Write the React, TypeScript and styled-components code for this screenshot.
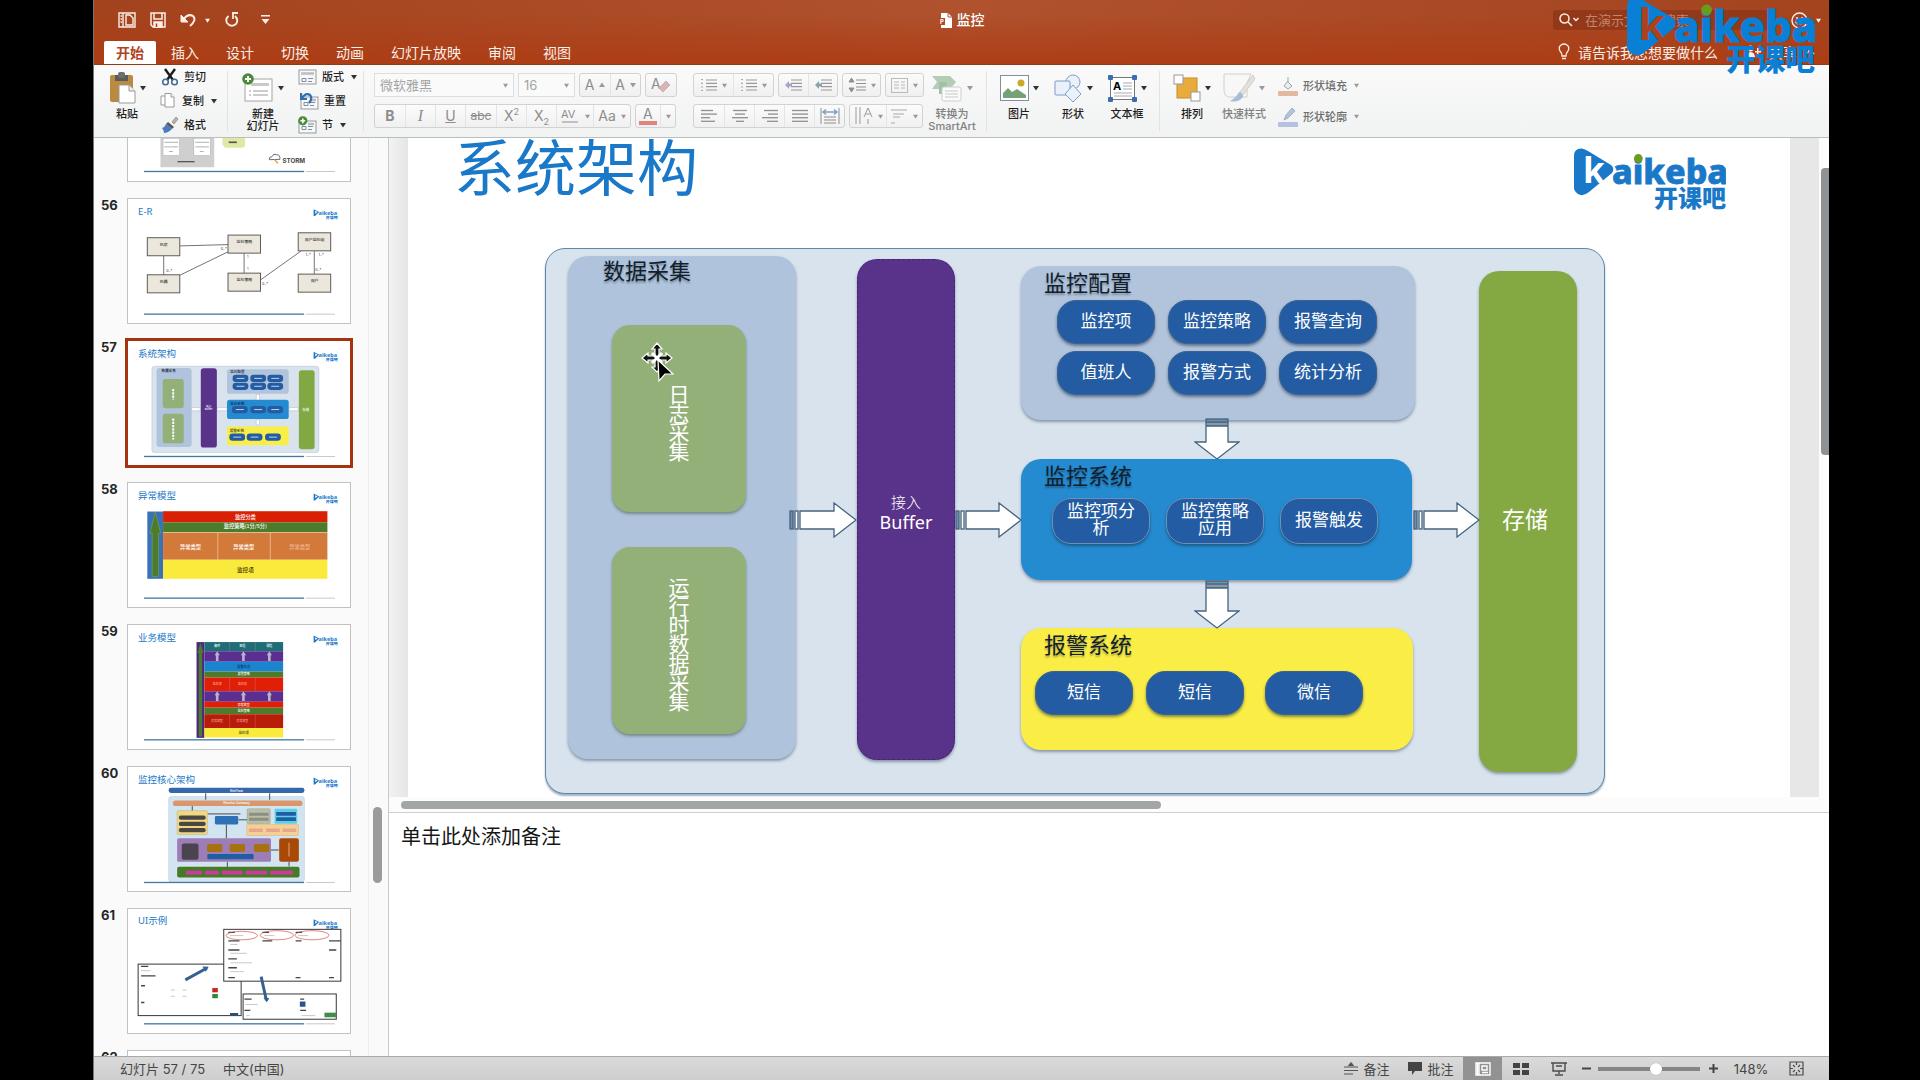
import React from "react";
import styled, { createGlobalStyle, css } from "styled-components";

const UI = `Inter, "Noto Sans CJK SC", sans-serif`;
const BLUE = "#1a78c8";

const Global = createGlobalStyle`
  * { box-sizing: border-box; }
  html, body, #root { height: 100%; }
  body { margin: 0; background: #000; font-family: ${UI}; color: #262626; overflow: hidden; }
  button, select, input, textarea { font: inherit; color: inherit; margin: 0; padding: 0; border: 0; background: none; }
  svg { display: block; flex: none; }
`;

/* ---------- window ---------- */

const Screen = styled.div`
  height: 100vh;
  padding: 0 91px 0 93px;
  background: #000;
`;

const Window = styled.div`
  position: relative;
  height: 100%;
  display: flex;
  flex-direction: column;
  border-left: 1px solid #777;
  background: #fff;
`;

const Header = styled.header`
  height: 65px;
  flex: none;
  display: flex;
  flex-direction: column;
  color: #fbeee6;
  border-bottom: 1px solid #8e3a1c;
  background: linear-gradient(180deg, transparent 20%, #ad3d15 100%),
    linear-gradient(90deg, #a2431d 0%, #b0522e 50%, #a3441f 100%);
`;

const TitleRow = styled.div`
  height: 40px;
  display: grid;
  grid-template-columns: 1fr auto 1fr;
  align-items: center;
`;

const QuickBar = styled.div`
  display: flex;
  align-items: center;
  padding: 0 24px;
  gap: 14px;
`;

const IconButton = styled.button`
  display: inline-flex;
  align-items: center;
  justify-content: center;
  gap: 8px;
`;

const DocTitle = styled.h1`
  margin: 0;
  display: flex;
  align-items: center;
  gap: 5px;
  font-size: 14px;
  line-height: 20px;
  font-weight: 500;
  color: #fff;
`;

const SearchArea = styled.div`
  display: flex;
  justify-content: flex-end;
  align-items: center;
  gap: 16px;
  padding-right: 8px;
`;

const SearchBox = styled.label`
  display: flex;
  align-items: center;
  gap: 6px;
  width: 222px;
  height: 20px;
  padding-left: 6px;
  background: #93391a;
  border-radius: 3px;
  input {
    width: 160px;
    font-size: 13px;
    line-height: 18px;
    outline: 0;
  }
  input::placeholder { color: #c4866d; opacity: 1; }
`;

const TabRow = styled.div`
  height: 24px;
  display: flex;
  justify-content: space-between;
  align-items: flex-end;
`;

const Tabs = styled.nav`
  display: flex;
  gap: 3px;
  padding-left: 10px;
`;

const Tab = styled.button<{ $active?: boolean }>`
  height: 23px;
  padding: 0 12px;
  font-size: 14px;
  line-height: 23px;
  ${(p) => p.$active && css`
    background: #fff;
    color: #b1441f;
    font-weight: 700;
    border-radius: 2px 2px 0 0;
  `}
`;

const Help = styled.div`
  display: flex;
  align-items: center;
  height: 24px;
  gap: 28px;
  padding-right: 14px;
  font-size: 14px;
`;

const Watermark = styled.div`
  position: absolute;
  top: -3px;
  right: 14px;
  z-index: 5;
`;

/* ---------- ribbon ---------- */

const Ribbon = styled.section`
  height: 73px;
  flex: none;
  display: flex;
  gap: 10px;
  padding-left: 11px;
  background: linear-gradient(180deg, #fafafa, #f1f2f2);
  border-bottom: 1px solid #bdbdbd;
  font-size: 11px;
  line-height: 12px;
`;

const Sep = styled.i`
  width: 1px;
  margin: 6px 0;
  background: #e3e3e3;
`;

const Cluster = styled.div<{ $gap: number; $lead?: number }>`
  display: flex;
  gap: ${(p) => p.$gap}px;
  margin-left: ${(p) => p.$lead || 0}px;
`;

const BigButton = styled.button<{ $w?: number; $muted?: boolean }>`
  width: ${(p) => p.$w || 44}px;
  padding-top: 6px;
  display: flex;
  flex-direction: column;
  align-items: center;
  gap: 3px;
  font-weight: 500;
  white-space: nowrap;
  color: ${(p) => (p.$muted ? "#808080" : "#1f1f1f")};
  span { display: flex; align-items: center; gap: 4px; height: 34px; }
`;

const Stack = styled.div<{ $w: number; $top?: number }>`
  width: ${(p) => p.$w}px;
  padding-top: ${(p) => p.$top || 0}px;
  display: flex;
  flex-direction: column;
`;

const SmallButton = styled.button<{ $tall?: boolean; $muted?: boolean }>`
  height: ${(p) => (p.$tall ? 31 : 24)}px;
  display: flex;
  align-items: center;
  gap: 5px;
  font-weight: 500;
  white-space: nowrap;
  color: ${(p) => (p.$muted ? "#6d6d6d" : "#1f1f1f")};
  & > svg:last-child { margin-left: 2px; }
`;

const ToolGrid = styled.div`
  display: flex;
  flex-direction: column;
  gap: 7px;
  padding-top: 8px;
`;

const ToolRow = styled.div`
  display: flex;
  gap: 4px;
  height: 24px;
`;

const ToolGroup = styled.div`
  display: flex;
  border: 1px solid #d2d2d2;
  border-radius: 3px;
  background: linear-gradient(180deg, #fbfbfb, #f0f0f0);
  color: #8d8d8d;
`;

const Tool = styled.button<{ $w: number }>`
  width: ${(p) => p.$w}px;
  display: flex;
  align-items: center;
  justify-content: center;
  gap: 5px;
  font-size: 14px;
  line-height: 22px;
  & + & { border-left: 1px solid #e4e4e4; }
  sup, sub { font-size: 9px; line-height: 9px; }
  i { font-family: "Liberation Serif", serif; font-size: 16px; }
  s { font-size: 12px; }
`;

const Combo = styled.label<{ $w: number }>`
  width: ${(p) => p.$w}px;
  display: flex;
  align-items: center;
  padding: 0 5px;
  border: 1px solid #dedede;
  background: #fafafa;
  color: #a3a3a3;
  select {
    flex: 1;
    min-width: 0;
    appearance: none;
    font-size: 13px;
    line-height: 20px;
    outline: 0;
  }
`;

/* ---------- body ---------- */

const Body = styled.div`
  flex: 1;
  min-height: 0;
  display: flex;
`;

const Navigator = styled.aside`
  width: 295px;
  flex: none;
  display: flex;
  overflow: hidden;
  background: #fafafa;
  border-right: 1px solid #c9c9c9;
`;

const SlideList = styled.ol`
  flex: 1;
  list-style: none;
  margin: -82px 0 0;
  padding: 0;
  display: flex;
  flex-direction: column;
  gap: 16px;
`;

const SlideItem = styled.li`
  display: flex;
  gap: 8px;
  padding-left: 7px;
`;

const Number = styled.span`
  width: 18px;
  font-size: 13px;
  line-height: 14px;
  font-weight: 700;
`;

const Thumb = styled.button<{ $on?: boolean }>`
  width: 224px;
  height: 126px;
  flex: none;
  overflow: hidden;
  background: #fff;
  border: 1px solid #c2c2c2;
  outline: ${(p) => (p.$on ? "3px solid #a5330f" : "0")};
  outline-offset: -1px;
  svg { width: 100%; height: 100%; }
`;

const Track = styled.div`
  width: 20px;
  padding: 669px 0 0 4px;
  border-left: 1px solid #ededed;
`;

const Grip = styled.div`
  width: 9px;
  height: 76px;
  border-radius: 5px;
  background: #9b9b9b;
`;

const Workspace = styled.main`
  flex: 1;
  min-width: 0;
  display: flex;
  flex-direction: column;
`;

const Stage = styled.div`
  flex: 1;
  min-height: 0;
  display: flex;
  padding-left: 19px;
  background: linear-gradient(90deg, #f2f2f2, #e6e6e6 18px, #e8e7e7);
`;

const StageTrack = styled.div`
  width: 10px;
  margin-left: 29px;
  padding: 30px 0 0 2px;
  background: #fcfcfc;
`;

const StageGrip = styled.div`
  height: 287px;
  border-radius: 4px 0 0 4px;
  background: #8f9295;
`;

const HTrack = styled.div`
  height: 16px;
  padding: 4px 20px 4px 12px;
  background: #fcfcfc;
  border-bottom: 1px solid #cfcfcf;
`;

const HGrip = styled.div`
  width: 54%;
  height: 8px;
  border-radius: 4px;
  background: #a3a6a7;
`;

const Notes = styled.textarea`
  height: 243px;
  flex: none;
  resize: none;
  outline: 0;
  padding: 10px 12px;
  background: #fff;
  color: #161616;
  font-size: 20px;
  line-height: 28px;
`;

/* ---------- slide ---------- */

const Slide = styled.article`
  position: relative;
  flex: 1;
  overflow: hidden;
  background: #fff;
  font-family: "Noto Sans", "Noto Sans CJK SC", sans-serif;
`;

const SlideTitle = styled.h2`
  margin: 0;
  padding: 0 46px;
  font-size: 61px;
  line-height: 60px;
  font-weight: 400;
  color: ${BLUE};
`;

const SlideLogo = styled.div`
  position: absolute;
  left: 1166px;
  top: 10px;
`;

type Box = { $x: number; $y: number; $w: number; $h: number };
const place = css<Box>`
  position: absolute;
  left: ${(p) => p.$x}px;
  top: ${(p) => p.$y}px;
  width: ${(p) => p.$w}px;
  height: ${(p) => p.$h}px;
`;

const Diagram = styled.div<Box>`
  ${place}
  border: 1px solid #5e87ad;
  border-radius: 20px;
  background: #d8e3ee;
  box-shadow: 0 2px 2px #9fb0bf;
`;

const Panel = styled.section<Box & { $bg: string }>`
  ${place}
  border-radius: 20px;
  background: ${(p) => p.$bg};
  box-shadow: 0 2px 3px rgba(60, 80, 100, 0.5);
`;

const PanelTitle = styled.h3<{ $left: number }>`
  margin: 0;
  padding: 4px 0 0 ${(p) => p.$left}px;
  font-size: 22px;
  line-height: 24px;
  font-weight: 400;
  color: #10202e;
  text-shadow: 0 2px 2px rgba(0, 0, 0, 0.3);
`;

const SourcePanel = styled(Panel)`
  ${PanelTitle} { padding-top: 2px; }
`;

const Sources = styled.div`
  display: flex;
  flex-direction: column;
  gap: 35px;
  padding: 43px 0 0 44px;
`;

const Source = styled.div`
  width: 134px;
  height: 187px;
  display: flex;
  align-items: center;
  justify-content: center;
  padding-top: 8px;
  border-radius: 18px;
  background: #93b078;
  box-shadow: 0 2px 3px rgba(60, 80, 60, 0.5);
  color: #fff;
  font-size: 21px;
  line-height: 19px;
  text-align: center;
  span { width: 21px; overflow-wrap: anywhere; }
`;

const Column = styled(Panel)`
  display: flex;
  flex-direction: column;
  align-items: center;
  justify-content: center;
  color: #fff;
  font-size: 18px;
  line-height: 20px;
  padding-top: 4px;
  b { font-weight: 300; font-size: 15px; }
`;

const BufferColumn = styled(Column)`
  border: 1px dashed #47237a;
`;

const StoreColumn = styled(Column)`
  font-size: 23px;
  padding: 0 6px 6px 0;
`;

const Pills = styled.div<{ $left: number; $top: number; $gap: number }>`
  display: grid;
  grid-template-columns: repeat(3, 98px);
  gap: 7px ${(p) => p.$gap}px;
  padding: ${(p) => p.$top}px 0 0 ${(p) => p.$left}px;
`;

const Pill = styled.div<{ $line?: string; $lead?: number; $h?: number }>`
  height: ${(p) => p.$h || 44}px;
  display: flex;
  align-items: center;
  justify-content: center;
  padding: 0 12px 4px;
  margin: 0 -${(p) => p.$lead || 0}px 0 ${(p) => p.$lead || 0}px;
  border-radius: 19px;
  border: 1px solid ${(p) => p.$line || "#3a6391"};
  background: #235ca2;
  box-shadow: 0 2px 3px rgba(20, 40, 70, 0.5);
  color: #fff;
  font-size: 17px;
  line-height: 17px;
  text-align: center;
`;

const ArrowBox = styled.div<Box>`
  ${place}
`;

const Cursor = styled.div`
  position: absolute;
  left: 233px;
  top: 204px;
`;

/* ---------- status bar ---------- */

const Status = styled.footer`
  height: 24px;
  flex: none;
  display: flex;
  align-items: center;
  justify-content: space-between;
  padding: 0 17px 0 26px;
  border-top: 1px solid #a9a9a9;
  background: linear-gradient(180deg, #dadada, #cecece);
  color: #454545;
  font-size: 13px;
  line-height: 20px;
`;

const StatusSide = styled.div`
  display: flex;
  align-items: center;
  height: 100%;
`;

const StatusText = styled.span`
  margin-right: 18px;
`;

const StatusButton = styled.button<{ $w: number; $on?: boolean }>`
  width: ${(p) => p.$w}px;
  height: 100%;
  display: flex;
  align-items: center;
  justify-content: center;
  gap: 5px;
  background: ${(p) => (p.$on ? "#929292" : "transparent")};
`;

const Zoom = styled.input`
  appearance: none;
  width: 102px;
  height: 12px;
  margin: 0 4px;
  background: linear-gradient(#858585, #858585) center / 100% 4px no-repeat;
  &::-webkit-slider-thumb {
    appearance: none;
    width: 12px;
    height: 12px;
    border-radius: 50%;
    background: #fff;
    box-shadow: 0 0 1px #888;
  }
`;

/* ---------- drawings ---------- */

const Caret = ({ c = "#333", s = 6, up }: { c?: string; s?: number; up?: boolean }) => (
  <svg width={s} height={s} viewBox="0 0 6 6"><path d={up ? "M0 5h6L3 .4z" : "M0 1h6L3 5.6z"} fill={c} /></svg>
);

const Logo = ({ w, color, hole }: { w: number; color: string; hole: string }) => (
  <svg width={w} height={(w * 64) / 152} viewBox="0 0 152 64" role="img" aria-label="Kaikeba">
    <path d="M0 8Q0 0 8 .5Q11 1 14 3L37 17Q41 20 38 25L15 44Q9 49 4 46Q0 43 0 40z" fill={color} />
    <text x="9" y="35" fontFamily="Noto Sans" fontWeight="700" fontSize="35" fill={hole}>k</text>
    <text x="38" y="36" fontFamily="Noto Sans" fontWeight="800" fontSize="34" fill={color} stroke={color} strokeWidth=".8">aikeba</text>
    <circle cx="64.3" cy="10.5" r="4.4" fill="#6a9a1e" />
    <text x="152" y="59" textAnchor="end" fontFamily="Noto Sans CJK SC" fontWeight="900" fontSize="24" fill={color}>开课吧</text>
  </svg>
);

const Arrow = ({ down, len }: { down?: boolean; len: number }) => {
  const body = (
    <g fill="#fff" stroke="#45637f" strokeWidth="1.3">
      <rect x="1" y="9" width="3" height="18" fill="#6f8fab" />
      <rect x="6" y="9" width="3" height="18" />
      <path d={`M11 9H${len - 23}V1L${len - 1} 18L${len - 23} 35V27H11z`} />
    </g>
  );
  const shortBody = (
    <g fill="#fff" stroke="#45637f" strokeWidth="1.3">
      <rect x="12" y="1" width="22" height="3" fill="#6f8fab" />
      <rect x="12" y="5" width="22" height="2" />
      <path d={`M12 8H34V${len - 18}H45L23 ${len - 1}L1 ${len - 18}H12z`} />
    </g>
  );
  return down
    ? <svg width="46" height={len} viewBox={`0 0 46 ${len}`}>{shortBody}</svg>
    : <svg width={len} height="36" viewBox={`0 0 ${len} 36`}>{body}</svg>;
};

const Lines = ({ rows, w = 16 }: { rows: [number, number][]; w?: number }) => (
  <svg width={w} height="14" viewBox={`0 0 ${w} 14`} stroke="#8f8f8f" strokeWidth="1.3">
    {rows.map(([a, b], i) => <path key={i} d={`M${a} ${1.5 + i * 3.6}H${b}`} />)}
  </svg>
);

const ListIcon = ({ dot }: { dot?: string }) => (
  <svg width="17" height="14" viewBox="0 0 17 14" stroke="#999" strokeWidth="1.2">
    <path d="M6 2H17M6 5.3H17M6 8.6H17M6 12H17" />
    {dot ? <path d="M0 7L4 3V5.500H7V8.500H4V11z" fill={dot} stroke="none" /> : <path d="M1 1.500H3M1 5.300H3M1 9H3M1 12.500H3" stroke="#aaa" />}
  </svg>
);

const PasteIcon = () => (
  <svg width="27" height="32" viewBox="0 0 27 32">
    <rect x="1" y="3" width="23" height="27" rx="2" fill="#b98a3f" />
    <rect x="6" y="3" width="13" height="6" fill="#5b5b5b" /><rect x="9" y="0" width="7" height="6" rx="2" fill="#6d6d6d" />
    <path d="M10 13H20L26 19V31H10z" fill="#fff" stroke="#999" /><path d="M20 13V19H26" fill="#eee" stroke="#999" />
  </svg>
);
const CutIcon = () => (
  <svg width="18" height="18" viewBox="0 0 18 18" fill="none">
    <path d="M4 1L12 12M14 1L6 12" stroke="#1c1c1c" strokeWidth="2.4" />
    <circle cx="4.500" cy="14" r="2.800" stroke="#3d6a97" strokeWidth="1.5" /><circle cx="13.500" cy="14" r="2.800" stroke="#3d6a97" strokeWidth="1.5" />
  </svg>
);
const CopyIcon = () => (
  <svg width="18" height="18" viewBox="0 0 18 18" fill="#fff" stroke="#9a9a9a">
    <path d="M2 4H8V13H2z" /><path d="M6 1.500H12L15 5V15H6z" /><path d="M12 1.500V5H15" />
  </svg>
);
const BrushIcon = () => (
  <svg width="18" height="18" viewBox="0 0 18 18">
    <path d="M11 6L15 1L17 3L13 8z" fill="#b9b4ae" stroke="#777" strokeWidth=".6" /><path d="M7 6L13 11L11 13L5 8z" fill="#555" />
    <path d="M5 8L11 13Q7 17 3 17Q3 14 1 12Q4 11 5 8z" fill="#4b7cc0" />
  </svg>
);
const Plus = ({ x = 6, y = 6 }) => (
  <g><circle cx={x} cy={y} r="5.800" fill="#4a8b3b" /><path d={`M${x - 3} ${y}H${x + 3}M${x} ${y - 3}V${y + 3}`} stroke="#fff" strokeWidth="2" /></g>
);
const NewSlideIcon = () => (
  <svg width="32" height="30" viewBox="0 0 32 30">
    <rect x="3" y="6" width="27" height="22" fill="#fff" stroke="#a4a4a4" />
    <rect x="9" y="10" width="18" height="3" fill="#c5ccc8" /><path d="M7 18H9M11 18H26M7 22H9M11 22H26" stroke="#999" />
    <Plus />
  </svg>
);
const LayoutIcon = ({ kind }: { kind: "layout" | "reset" | "section" }) => (
  <svg width="19" height="18" viewBox="0 0 19 18">
    <rect x="1" y={kind === "layout" ? 2 : 5} width="17" height={kind === "layout" ? 14 : 12} fill="#f8f8f8" stroke="#9a9a9a" />
    <path d={kind === "layout" ? "M3 5.500H16" : "M10 8H16"} stroke="#b9bdc4" strokeWidth="2.500" />
    <path d="M4 10.500H8V13.500H4zM10 10.500H15M10 13.500H14" stroke="#7b8fa8" fill="none" />
    {kind === "reset" && <path d="M1 1V7H7M1.500 6.500Q6 0 10 3Q13 6 9 11" fill="none" stroke="#2f6eb5" strokeWidth="2.200" />}
    {kind === "section" && <g transform="scale(.8)"><Plus /></g>}
  </svg>
);
const SmartArtIcon = () => (
  <svg width="32" height="28" viewBox="0 0 32 28">
    <path d="M1 2H19L25 8L19 15H1L6 8z" fill="#b3cdb5" /><path d="M8 8H16V20H8z" fill="#a3c1a7" />
    <rect x="11" y="13" width="19" height="14" rx="2" fill="#fbfbfb" stroke="#cfcfcf" /><path d="M14 17H27M14 20H27M14 23H27" stroke="#c7c7c7" />
  </svg>
);
const PictureIcon = () => (
  <svg width="29" height="26" viewBox="0 0 29 26">
    <rect x=".5" y=".5" width="28" height="25" fill="#fff" stroke="#82909b" /><circle cx="21" cy="8" r="3.500" fill="#cda82a" />
    <path d="M3 23V18L8 13L12 17L17 14L26 20V23z" fill="#76a075" />
  </svg>
);
const ShapesIcon = () => (
  <svg width="29" height="29" viewBox="0 0 29 29" fill="#eaf1fb" stroke="#7c9cc8">
    <circle cx="19" cy="8" r="7" /><rect x="1" y="7" width="15" height="14" rx="1" /><path d="M19 11L27 20L19 28L11 20z" />
  </svg>
);
const TextBoxIcon = () => (
  <svg width="29" height="27" viewBox="0 0 29 27">
    <rect x="2.500" y="2.500" width="24" height="22" fill="#fff" stroke="#777" />
    {[[0, 0], [24, 0], [0, 22], [24, 22]].map(([x, y], i) => <rect key={i} x={x} y={y} width="5" height="5" rx="1" fill="#3e6cb0" />)}
    <text x="5" y="15" fontFamily="Inter" fontWeight="700" fontSize="11">A</text><path d="M15 8H24M15 11H24M15 14H24M6 18H24M6 21H24" stroke="#aaa" />
  </svg>
);
const ArrangeIcon = () => (
  <svg width="28" height="28" viewBox="0 0 28 28">
    <rect x="4" y="4" width="20" height="20" fill="#e8ac3c" stroke="#c48e2b" /><rect x="1" y="1" width="9" height="9" fill="#fff" stroke="#999" /><rect x="18" y="18" width="9" height="9" fill="#fff" stroke="#999" />
  </svg>
);
const StyleIcon = () => (
  <svg width="32" height="30" viewBox="0 0 32 30">
    <path d="M1 1H28L24 10V24H5Q1 22 1 18z" fill="#f7f7f7" stroke="#d0d0d0" /><path d="M30 2L17 19L20 22L32 6z" fill="#e4e2d8" stroke="#bbb" strokeWidth=".6" />
    <path d="M16 19Q20 20 20 24Q15 30 7 28Q13 25 16 19z" fill="#a9bbd9" />
  </svg>
);
const FillIcon = ({ line }: { line?: boolean }) => (
  <svg width="20" height="20" viewBox="0 0 20 20">
    {line ? <path d="M6 13L8 8L14 1L17 4L10 11z" fill="#b3c3da" stroke="#8fa5c6" strokeWidth=".8" /> : <path d="M10 1V6L14 10L10 13L6 10L10 5" fill="#e9eef0" stroke="#98a7aa" />}
    <rect x="0" y="15" width="20" height="5" rx="1" fill={line ? "#b5c2de" : "#e2b9a0"} />
  </svg>
);

const MiniLogo = ({ y }: { y: number }) => (
  <g fill={BLUE}>
    <path d={`M675 ${y}l17 9l-13 12h-4z`} /><path d={`M680 ${y + 5}v9l7 -5z`} fill="#fff" />
    <text x="690" y={y + 17} fontFamily="Noto Sans" fontWeight="700" fontSize="17">aikeba</text>
    <text x="748" y={y + 29} textAnchor="end" fontFamily="Noto Sans CJK SC" fontWeight="900" fontSize="12">开课吧</text>
  </g>
);
const MiniFoot = ({ y }: { y: number }) => (
  <g><rect x="158" y={y - 2} width="488" height="4" fill="#4179a6" /><path d={`M652 ${y}H740`} stroke="#aaa" strokeWidth="2" /></g>
);
const MiniTitle = ({ y, children }: { y: number; children: string }) => (
  <text x="140" y={y} fontFamily="Noto Sans, Noto Sans CJK SC" fontSize="29" fontWeight="400" fill={BLUE}>{children}</text>
);
const T = ({ x, y, s = 14, c = "#fff", children }: { x: number; y: number; s?: number; c?: string; children: string }) => (
  <text x={x} y={y} fontFamily="Noto Sans CJK SC" fontSize={s} fontWeight="500" fill={c} textAnchor="middle">{children}</text>
);

const Thumb55 = () => (
  <svg viewBox="112 -236 671 378">
    <rect x="208" y="-150" width="164" height="250" fill="#cfcfcf" /><rect x="268" y="-100" width="40" height="106" fill="#bdbdbd" />
    {[216, 310].map((x) => <g key={x}><rect x={x} y="12" width="50" height="52" fill="#fff" stroke="#999" /><path d={`M${x + 4} 24h42M${x + 4} 38h42M${x + 18} 52h12`} stroke="#888" strokeWidth="2" /></g>)}
    <path d="M260 83H312" stroke="#555" strokeWidth="4" /><path d="M397 -20H466V36L458 41H405L397 30z" fill="#dfe9a4" /><path d="M416 24H441" stroke="#555" strokeWidth="5" />
    <path d="M540 77Q538 68 548 68Q552 56 562 62Q574 62 572 76z" fill="none" stroke="#5a6a80" strokeWidth="3" /><path d="M555 76L566 88" stroke="#e0a030" strokeWidth="4" />
    <text x="580" y="88" fontFamily="Inter" fontWeight="700" fontSize="19" fill="#444">STORM</text><MiniFoot y={113} />
  </svg>
);
const Thumb56 = () => (
  <svg viewBox="112 187 671 378">
    <MiniTitle y={235}>E-R</MiniTitle><MiniLogo y={218} />
    <path d="M267 330L414 326M218 360V418M268 419L414 348M463 352V414M514 433L636 346M677 346V416" stroke="#555" strokeWidth="2.500" fill="none" />
    {([[168, 305, "机房"], [414, 297, "监控策略"], [628, 290, "用户监控组"], [168, 418, "机器"], [414, 413, "监控策略"], [628, 416, "用户"]] as [number, number, string][]).map(([x, y, t], i) => (
      <g key={i}><rect x={x} y={y} width="99" height="55" fill="#ebe7dc" stroke="#5d5a55" strokeWidth="3" /><T x={x + 50} y={y + 24} s={12} c="#333">{t}</T></g>
    ))}
    <g fontSize="11" fontFamily="Inter" fill="#333"><text x="226" y="409">0..*</text><text x="392" y="341">0..*</text><text x="472" y="368">1</text><text x="472" y="404">1</text><text x="518" y="448">0..*</text><text x="650" y="360">1..*</text><text x="690" y="360">1..*</text><text x="680" y="408">0..*</text></g>
    <MiniFoot y={538} />
  </svg>
);
const Thumb57 = () => (
  <svg viewBox="112 612 671 378">
    <MiniTitle y={662}>系统架构</MiniTitle><MiniLogo y={645} />
    <rect x="182" y="689" width="509" height="263" rx="8" fill="#d8e3ee" stroke="#8fa9c2" />
    <rect x="196" y="694" width="107" height="241" rx="10" fill="#afc3dc" /><rect x="215" y="728" width="64" height="89" rx="8" fill="#93b078" /><rect x="215" y="834" width="64" height="90" rx="8" fill="#93b078" />
    <rect x="331" y="695" width="49" height="242" rx="9" fill="#59328a" /><rect x="630" y="701" width="48" height="241" rx="9" fill="#82a843" />
    <rect x="411" y="698" width="188" height="75" rx="8" fill="#b1c4dc" /><rect x="411" y="791" width="188" height="59" rx="8" fill="#258bd0" /><rect x="411" y="873" width="188" height="57" rx="6" fill="#f9ee46" />
    {[[428, 715], [482, 715], [534, 715], [428, 739], [482, 739], [534, 739], [426, 810], [482, 810], [534, 810], [418, 894], [471, 894], [527, 894]].map(([x, y], i) => (
      <g key={i}><rect x={x} y={y} width="48" height="22" rx="10" fill="#235ca2" /><path d={`M${x + 12} ${y + 11}h24`} stroke="#c4d6ec" strokeWidth="3" /></g>
    ))}
    <path d="M303 815h26v10h-26zM381 815h30v10h-30zM600 815h28v10h-28zM500 775h10v16h-10zM500 852h10v16h-10z" fill="#fff" stroke="#8594a6" />
    <T x={233} y={706} s={11} c="#223">数据采集</T><T x={443} y={711} s={11} c="#223">监控配置</T><T x={443} y={806} s={11} c="#124">监控系统</T><T x={441} y={888} s={11} c="#332">报警系统</T>
    <path d="M247 758v32M247 848v64" stroke="#fff" strokeWidth="6" strokeDasharray="7 3" /><T x={355} y={814} s={8}>接入</T><T x={355} y={823} s={8}>Buffer</T><T x={651} y={825} s={10}>存储</T>
    <MiniFoot y={964} />
  </svg>
);
const Thumb58 = () => (
  <svg viewBox="112 33 671 378">
    <MiniTitle y={83}>异常模型</MiniTitle><MiniLogo y={65} />
    <rect x="168" y="120" width="48" height="205" fill="#3a72b8" /><path d="M192 122L209 186H202V318H183V186H176z" fill="#4c7b2c" stroke="#7da04a" strokeWidth="2" />
    <rect x="216" y="119" width="501" height="34" fill="#d92005" /><rect x="216" y="153" width="501" height="31" fill="#4c7b2c" /><rect x="216" y="184" width="501" height="83" fill="#d37a3b" /><rect x="216" y="267" width="501" height="58" fill="#f9ea3c" />
    <path d="M383 184V267M543 184V267M216 184H717" stroke="#efcfae" strokeWidth="2" />
    <T x={467} y={142} s={16}>监控分类</T><T x={467} y={171} s={16}>监控策略(1分/5分)</T><T x={300} y={235} s={16}>异常类型</T><T x={462} y={235} s={16}>异常类型</T><T x={633} y={235} s={16} c="#f0b48c">异常类型</T><T x={467} y={304} s={17} c="#453a05">监控项</T>
    <MiniFoot y={384} />
  </svg>
);
const Thumb59 = () => (
  <svg viewBox="112 460 671 378">
    <MiniTitle y={508}>业务模型</MiniTitle><MiniLogo y={492} />
    <rect x="318" y="512" width="24" height="292" fill="#4c2a80" /><path d="M330 514L339 545H335V800H325V545H321z" fill="#4c7b2c" />
    {([[512, 28, "#1f6d77"], [540, 32, "#5b2f92"], [572, 30, "#1b84cf"], [602, 18, "#4c7b2c"], [620, 42, "#e01f06"], [662, 32, "#5b2f92"], [694, 18, "#e01f06"], [712, 20, "#4c7b2c"], [732, 42, "#b91c08"], [774, 29, "#f9ea3c"]] as [number, number, string][]).map(([y, h, f], i) => <rect key={i} x="342" y={y} width="240" height={h} fill={f} />)}
    {[381, 461, 540].map((x) => [540, 662].map((y) => <path key={x + "-" + y} d={`M${x} ${y}l8 12h-4v18h-8v-18h-4z`} fill="#b9b3c7" />))}
    <path d="M419 512V540M497 512V540M419 620V662M497 620V662M419 732V774M497 732V774" stroke="#d88" />
    <T x={381} y={528} s={9}>邮件</T><T x={458} y={528} s={9}>短信</T><T x={540} y={528} s={9}>微信</T>
    <T x={462} y={590} s={10} c="#0b2b55">报警方式</T><T x={462} y={613} s={9}>报警策略</T>
    <T x={381} y={642} s={9} c="#f7a99c">监控项</T><T x={458} y={642} s={9} c="#f7a99c">监控项</T><T x={462} y={707} s={9}>异常类型</T><T x={462} y={725} s={9}>监控策略</T><T x={381} y={755} s={9} c="#e9a79c">异常类型</T><T x={458} y={755} s={9} c="#e9a79c">异常类型</T><T x={462} y={793} s={10} c="#332">监控项</T>
    <MiniFoot y={810} />
  </svg>
);
const Thumb60 = () => (
  <svg viewBox="112 45 671 378">
    <MiniTitle y={94}>监控核心架构</MiniTitle><MiniLogo y={77} />
    <rect x="233" y="135" width="414" height="260" rx="8" fill="#d3e4f1" stroke="#9fb6cc" />
    <rect x="233" y="108" width="414" height="16" rx="7" fill="#3667ab" /><T x={440} y={120} s={10}>NetFlow</T><rect x="246" y="147" width="395" height="17" rx="8" fill="#da966c" /><T x={440} y={159} s={10}>Monitor Gateway</T>
    <path d="M346 125v20M541 125v20M305 164v14M409 220v42M412 334v16M600 334v14M352 188h100M446 206h26M545 298h24" stroke="#3f4a58" strokeWidth="3" />
    <rect x="259" y="178" width="92" height="73" rx="4" fill="#f0d881" stroke="#a8935a" />
    {[193, 212, 231].map((y) => <rect key={y} x="264" y={y} width="82" height="13" rx="6" fill="#4a4742" />)}
    <rect x="374" y="194" width="71" height="26" rx="4" fill="#2e72b5" /><rect x="472" y="172" width="71" height="46" rx="4" fill="#b9bfa2" stroke="#888" /><path d="M478 189h60M478 204h60" stroke="#8b8f86" strokeWidth="9" />
    <rect x="556" y="172" width="69" height="46" rx="4" fill="#5ed0e2" /><path d="M561 188h60M561 204h60" stroke="#1f5da5" strokeWidth="11" />
    <rect x="471" y="220" width="158" height="34" rx="3" fill="#f6cf94" stroke="#c89b57" /><path d="M478 238h42M530 238h42M580 238h42" stroke="#e4a98d" strokeWidth="11" />
    <rect x="259" y="262" width="286" height="72" rx="5" fill="#9d7db5" /><rect x="273" y="278" width="51" height="50" rx="6" fill="#4a4350" />
    {[350, 419, 493].map((x) => <rect key={x} x={x} y="280" width="47" height="24" rx="6" fill="#a5720f" />)}
    <rect x="351" y="310" width="141" height="16" rx="3" fill="#1f5da5" /><rect x="570" y="262" width="60" height="72" rx="6" fill="#a84908" /><path d="M600 276v42" stroke="#c9783f" strokeWidth="6" />
    <rect x="259" y="349" width="373" height="33" rx="6" fill="#487a25" /><path d="M286 367h48M344 367h42M396 367h62M467 367h66M543 367h68" stroke="#cf38a4" strokeWidth="12" />
    <MiniFoot y={397} />
  </svg>
);
const Thumb61 = () => (
  <svg viewBox="112 472 671 378">
    <MiniTitle y={519}>UI示例</MiniTitle><MiniLogo y={503} />
    <g fill="#fff" stroke="#333" strokeWidth="3"><rect x="140" y="640" width="314" height="157" /><rect x="401" y="534" width="357" height="158" /><rect x="460" y="731" width="284" height="77" /></g>
    <path d="M149 647h22M149 676h44M149 706h12M149 757h10M415 543h20M519 543h20M620 543h20M415 569h34M519 569h30M620 569h18M722 569h36M415 597h34M722 597h22M415 624h26M415 651h26M415 681h20M620 681h15M722 681h15M464 747h22M634 747h12M464 781h18M634 781h18" stroke="#444" strokeWidth="4" />
    <path d="M149 660h28M420 553h40M525 553h30M628 553h30M421 580h22M421 607h50M421 636h66M421 663h42M467 763h38M470 797h10M638 797h42M240 719h12M275 719h12M240 738h12M275 738h12" stroke="#aaa" strokeWidth="2" />
    <g fill="none" stroke="#cf4a3c" strokeWidth="2"><ellipse cx="456" cy="553" rx="48" ry="13" /><ellipse cx="563" cy="552" rx="51" ry="14" /><ellipse cx="670" cy="552" rx="52" ry="14" /></g>
    <path d="M284 688L350 652M515 678L531 750" stroke="#35608f" strokeWidth="9" /><path d="M336 647L355 648L346 663zM522 742L540 744L532 756z" fill="#35608f" />
    <rect x="366" y="713" width="17" height="13" fill="#c3271f" /><rect x="366" y="731" width="17" height="13" fill="#2e8a38" /><rect x="633" y="754" width="17" height="16" fill="#2b538c" /><rect x="708" y="788" width="35" height="14" fill="#3c8f44" /><rect x="420" y="789" width="25" height="8" fill="#25507c" />
    <MiniFoot y={822} />
  </svg>
);
const Thumb62 = () => <svg viewBox="0 0 671 378" />;

const thumbs: [number, () => React.ReactElement][] = [
  [55, Thumb55], [56, Thumb56], [57, Thumb57], [58, Thumb58], [59, Thumb59], [60, Thumb60], [61, Thumb61], [62, Thumb62],
];

const G = "#9a9a9a";

export default function App() {
  return (
    <>
      <Global />
      <Screen>
        <Window>
          <Header>
            <TitleRow>
              <QuickBar>
                <IconButton aria-label="新建">
                  <svg width="18" height="16" viewBox="0 0 18 16" fill="none" stroke="#fbeee6" strokeWidth="1.4"><path d="M1 1H17V15H1zM5 1V15" /><path d="M8 3H12L15 6V13H8z" /><path d="M2.500 4h1.500M2.500 7h1.500M2.500 10h1.500" /></svg>
                </IconButton>
                <IconButton aria-label="保存">
                  <svg width="16" height="16" viewBox="0 0 16 16" fill="none" stroke="#fbeee6" strokeWidth="1.500"><path d="M1 1H15V15H3L1 13z" /><path d="M4 1V7H12V1" /><path d="M4 15V10H12V15z" fill="#fbeee6" /><path d="M6.500 11.500V15" stroke="#a2431d" /></svg>
                </IconButton>
                <IconButton aria-label="撤消">
                  <svg width="17" height="14" viewBox="0 0 17 14" fill="none" stroke="#fbeee6" strokeWidth="2"><path d="M3 7Q8 0 13 3Q17 7 10 13" /><path d="M1 2V9H8z" fill="#fbeee6" strokeWidth="1" /></svg>
                  <Caret c="#fbeee6" s={5} />
                </IconButton>
                <IconButton aria-label="重复">
                  <svg width="16" height="16" viewBox="0 0 16 16" fill="none" stroke="#fbeee6" strokeWidth="1.800"><path d="M4.500 4Q1 7 3 11Q7 16 12 12Q15 8 11 4" /><path d="M8 1H14M9 1V7" /></svg>
                </IconButton>
                <IconButton aria-label="自定义">
                  <svg width="22" height="10" viewBox="0 0 22 10" fill="#fbeee6"><path d="M7 0H16V1.500H7zM7.500 4H15.500L11.500 9z" /></svg>
                </IconButton>
              </QuickBar>
              <DocTitle>
                <svg width="13" height="15" viewBox="0 0 13 15"><path d="M2 0H9L13 4V15H2z" fill="#fff" /><path d="M9 0V4H13" fill="none" stroke="#a55" /><rect x="0" y="5" width="6" height="7" fill="#b04a28" /><text x="1" y="11" fontSize="6" fontFamily="Inter" fontWeight="700" fill="#fff">P</text></svg>
                监控
              </DocTitle>
              <SearchArea>
                <SearchBox>
                  <svg width="20" height="14" viewBox="0 0 20 14" fill="none" stroke="#fbeee6" strokeWidth="1.500"><circle cx="5.500" cy="5.500" r="4.500" /><path d="M9 9L13 13M14.500 5L17 7.500L19.500 5" /></svg>
                  <input aria-label="搜索" placeholder="在演示文稿中搜索" />
                </SearchBox>
                <IconButton aria-label="反馈">
                  <svg width="17" height="17" viewBox="0 0 17 17" fill="none" stroke="#fbeee6" strokeWidth="1.400"><circle cx="8.500" cy="8.500" r="7.500" /><path d="M6 5V7.500M11 5V7.500M4.500 10Q8.500 14.500 12.500 10" /></svg>
                  <Caret c="#fbeee6" s={5} />
                </IconButton>
              </SearchArea>
            </TitleRow>
            <TabRow>
              <Tabs>
                {["开始", "插入", "设计", "切换", "动画", "幻灯片放映", "审阅", "视图"].map((t, i) => <Tab key={t} $active={i === 0}>{t}</Tab>)}
              </Tabs>
              <Help>
                <IconButton>
                  <svg width="12" height="18" viewBox="0 0 12 18" fill="none" stroke="#fbeee6" strokeWidth="1.300"><path d="M4 13Q4 10 2 8Q0 4 3 2Q6 0 9 2Q12 4 10 8Q8 10 8 13zM4 15.500H8" /></svg>
                  请告诉我您想要做什么
                </IconButton>
                <IconButton>
                  <svg width="15" height="14" viewBox="0 0 15 14" fill="#fbeee6"><circle cx="4.500" cy="3.500" r="3" /><path d="M0 13Q0 7 4.500 7Q9 7 9 13zM11 3h1.500v3H15v1.500h-2.500V10H11V7.500H9V6h2z" /></svg>
                  共享
                  <svg width="10" height="6" viewBox="0 0 10 6" fill="none" stroke="#fbeee6" strokeWidth="1.500"><path d="M1 5L5 1L9 5" /></svg>
                </IconButton>
              </Help>
            </TabRow>
          </Header>
          <Watermark><Logo w={188} color="#0a7fd6" hole="#ab421c" /></Watermark>

          <Ribbon>
            <BigButton><span><PasteIcon /><Caret /></span>粘贴</BigButton>
            <Stack $w={58}>
              <SmallButton><CutIcon />剪切</SmallButton>
              <SmallButton><CopyIcon />复制<Caret /></SmallButton>
              <SmallButton><BrushIcon />格式</SmallButton>
            </Stack>
            <Sep />
            <BigButton $w={50}><span><NewSlideIcon /><Caret /></span>新建<br />幻灯片</BigButton>
            <Stack $w={55}>
              <SmallButton><LayoutIcon kind="layout" />版式<Caret /></SmallButton>
              <SmallButton><LayoutIcon kind="reset" />重置</SmallButton>
              <SmallButton><LayoutIcon kind="section" />节<Caret /></SmallButton>
            </Stack>
            <Sep />
            <ToolGrid>
              <ToolRow>
                <Combo $w={140}><select aria-label="字体"><option>微软雅黑</option></select><Caret c={G} s={5} /></Combo>
                <Combo $w={57}><select aria-label="字号"><option>16</option></select><Caret c={G} s={5} /></Combo>
                <ToolGroup><Tool $w={30}>A<Caret c={G} s={6} up /></Tool><Tool $w={30}>A<Caret c={G} s={6} /></Tool></ToolGroup>
                <ToolGroup><Tool $w={30} aria-label="清除格式"><svg width="20" height="18" viewBox="0 0 20 18"><text x="0" y="13" fontSize="14" fontFamily="Inter" fill="#8d8d8d">A</text><path d="M8 12L15 5L19 9L12 16z" fill="#dcb4b4" stroke="#bb9a9a" strokeWidth=".6" /></svg></Tool></ToolGroup>
              </ToolRow>
              <ToolRow>
                <ToolGroup>
                  <Tool $w={30}><b>B</b></Tool><Tool $w={30}><i>I</i></Tool><Tool $w={30}><u>U</u></Tool><Tool $w={31}><s>abc</s></Tool>
                  <Tool $w={30}><span>X<sup>2</sup></span></Tool><Tool $w={30}><span>X<sub>2</sub></span></Tool>
                  <Tool $w={37}><svg width="19" height="16" viewBox="0 0 19 16"><text x="0" y="10" fontSize="11" fontFamily="Inter" fill="#8d8d8d">AV</text><path d="M1 14H17" stroke="#8d8d8d" /></svg><Caret c={G} s={5} /></Tool>
                  <Tool $w={37}>Aa<Caret c={G} s={5} /></Tool>
                </ToolGroup>
                <ToolGroup>
                  <Tool $w={24}><svg width="18" height="18" viewBox="0 0 18 18"><text x="4" y="12" fontSize="14" fontFamily="Inter" fill="#8d8d8d">A</text><rect x="0" y="14" width="18" height="4" fill="#e0837a" /></svg></Tool>
                  <Tool $w={15} aria-label="字体颜色"><Caret c={G} s={5} /></Tool>
                </ToolGroup>
              </ToolRow>
            </ToolGrid>
            <Cluster $gap={4} $lead={6}>
              <ToolGrid>
                <ToolRow>
                  <ToolGroup><Tool $w={39} aria-label="项目符号"><ListIcon /><Caret c={G} s={5} /></Tool><Tool $w={40} aria-label="编号"><ListIcon /><Caret c={G} s={5} /></Tool></ToolGroup>
                  <ToolGroup><Tool $w={29} aria-label="减少缩进"><ListIcon dot="#a9a5c9" /></Tool><Tool $w={29} aria-label="增加缩进"><ListIcon dot="#86a5ab" /></Tool></ToolGroup>
                  <ToolGroup><Tool $w={37} aria-label="行距"><svg width="18" height="16" viewBox="0 0 18 16" stroke="#909090" fill="#909090"><path d="M3.500 1L6 5H1zM3.500 15L6 11H1z" /><path d="M8 3H18M8 6.500H18M8 10H18M8 13H18" /></svg><Caret c={G} s={5} /></Tool></ToolGroup>
                  <ToolGroup><Tool $w={37} aria-label="分栏"><svg width="17" height="15" viewBox="0 0 17 15" stroke="#bababa" fill="none"><rect x=".5" y=".5" width="16" height="14" /><path d="M3 4H8M3 7H8M3 10H8M10 4H14M10 7H14M10 10H14" /></svg><Caret c={G} s={5} /></Tool></ToolGroup>
                </ToolRow>
                <ToolRow>
                  <ToolGroup>
                    <Tool $w={30} aria-label="左对齐"><Lines rows={[[0, 12], [0, 16], [0, 9], [0, 14]]} /></Tool>
                    <Tool $w={30} aria-label="居中"><Lines rows={[[1, 15], [3, 13], [0, 16], [4, 12]]} /></Tool>
                    <Tool $w={30} aria-label="右对齐"><Lines rows={[[2, 16], [6, 16], [0, 16], [5, 16]]} /></Tool>
                    <Tool $w={30} aria-label="两端对齐"><Lines rows={[[0, 16], [0, 16], [0, 16], [0, 16]]} /></Tool>
                    <Tool $w={30} aria-label="分散对齐"><svg width="20" height="16" viewBox="0 0 20 16" fill="none" stroke="#8d8d8d"><path d="M1 0V16M19 0V16M4 9H16M4 12H16M4 15H16" /><path d="M3 4H17M6 1.500L3 4L6 6.500M14 1.500L17 4L14 6.500" stroke="#7fa0bf" strokeWidth="1.500" /></svg></Tool>
                  </ToolGroup>
                  <ToolGroup>
                    <Tool $w={36} aria-label="文字方向"><svg width="19" height="18" viewBox="0 0 19 18" stroke="#9a9a9a" fill="none"><path d="M2 0V17M6 0V17M10 10L14 1L18 10M11.500 7H16.500M14 12V17" /></svg><Caret c={G} s={5} /></Tool>
                    <Tool $w={36} aria-label="对齐文本"><svg width="17" height="15" viewBox="0 0 17 15" stroke="#aaa" fill="none"><path d="M0 1H16M2 5H13M2 8H9" /><path d="M0 14H4" /></svg><Caret c={G} s={5} /></Tool>
                  </ToolGroup>
                </ToolRow>
              </ToolGrid>
              <BigButton $w={48} $muted><span><SmartArtIcon /><Caret c={G} /></span>转换为<br />SmartArt</BigButton>
            </Cluster>
            <Sep />
            <BigButton><span><PictureIcon /><Caret /></span>图片</BigButton>
            <BigButton><span><ShapesIcon /><Caret /></span>形状</BigButton>
            <BigButton><span><TextBoxIcon /><Caret /></span>文本框</BigButton>
            <Sep />
            <Cluster $gap={6}>
              <BigButton><span><ArrangeIcon /><Caret /></span>排列</BigButton>
              <BigButton $w={48} $muted><span><StyleIcon /><Caret c={G} /></span>快速样式</BigButton>
            </Cluster>
            <Stack $w={90} $top={5}>
              <SmallButton $tall $muted><FillIcon />形状填充<Caret c={G} s={5} /></SmallButton>
              <SmallButton $tall $muted><FillIcon line />形状轮廓<Caret c={G} s={5} /></SmallButton>
            </Stack>
          </Ribbon>

          <Body>
            <Navigator>
              <SlideList>
                {thumbs.map(([n, Pic]) => (
                  <SlideItem key={n}><Number>{n}</Number><Thumb $on={n === 57} aria-label={`幻灯片 ${n}`}><Pic /></Thumb></SlideItem>
                ))}
              </SlideList>
              <Track><Grip /></Track>
            </Navigator>

            <Workspace>
              <Stage>
                <Slide>
                  <SlideTitle>系统架构</SlideTitle>
                  <SlideLogo><Logo w={152} color={BLUE} hole="#fff" /></SlideLogo>
                  <Diagram $x={137} $y={110} $w={1060} $h={546}>
                    <SourcePanel $x={22} $y={7} $w={228} $h={503} $bg="#afc3dc">
                      <PanelTitle $left={35}>数据采集</PanelTitle>
                      <Sources>
                        <Source><span>日志采集</span></Source>
                        <Source><span>运行时数据采集</span></Source>
                      </Sources>
                    </SourcePanel>
                    <BufferColumn $x={311} $y={10} $w={98} $h={501} $bg="#59328a"><b>接入</b>Buffer</BufferColumn>
                    <Panel $x={475} $y={17} $w={394} $h={154} $bg="#b1c4dc">
                      <PanelTitle $left={23}>监控配置</PanelTitle>
                      <Pills $left={36} $top={6} $gap={13}>
                        {["监控项", "监控策略", "报警查询", "值班人", "报警方式", "统计分析"].map((t) => <Pill key={t}>{t}</Pill>)}
                      </Pills>
                    </Panel>
                    <Panel $x={475} $y={210} $w={391} $h={121} $bg="#258bd0">
                      <PanelTitle $left={23}>监控系统</PanelTitle>
                      <Pills $left={31} $top={11} $gap={16}>
                        {["监控项分析", "监控策略应用", "报警触发"].map((t) => <Pill key={t} $h={46} $line="#6f8fb4">{t}</Pill>)}
                      </Pills>
                    </Panel>
                    <Panel $x={475} $y={379} $w={392} $h={122} $bg="#faee46">
                      <PanelTitle $left={23}>报警系统</PanelTitle>
                      <Pills $left={14} $top={15} $gap={13}>
                        <Pill>短信</Pill><Pill>短信</Pill><Pill $lead={8}>微信</Pill>
                      </Pills>
                    </Panel>
                    <StoreColumn $x={933} $y={22} $w={98} $h={501} $bg="#84a943">存储</StoreColumn>
                    <ArrowBox $x={243} $y={253} $w={68} $h={36}><Arrow len={68} /></ArrowBox>
                    <ArrowBox $x={409} $y={253} $w={67} $h={36}><Arrow len={67} /></ArrowBox>
                    <ArrowBox $x={867} $y={253} $w={67} $h={36}><Arrow len={67} /></ArrowBox>
                    <ArrowBox $x={648} $y={169} $w={46} $h={42}><Arrow down len={42} /></ArrowBox>
                    <ArrowBox $x={648} $y={331} $w={46} $h={49}><Arrow down len={49} /></ArrowBox>
                  </Diagram>
                  <Cursor>
                    <svg width="34" height="40" viewBox="0 0 34 40" stroke="#fff" strokeWidth="1.200">
                      <path d="M16 1L21 7H18V14H25V11L31 16L25 21V18H18V25H21L16 30L11 25H14V18H7V21L1 16L7 11V14H14V7H11z" fill="#111" />
                      <path d="M11 11L21 21M21 11L11 21" strokeWidth="3" /><path d="M17 18L32 32L24 32L18 39z" fill="#000" />
                    </svg>
                  </Cursor>
                </Slide>
                <StageTrack><StageGrip /></StageTrack>
              </Stage>
              <HTrack><HGrip /></HTrack>
              <Notes aria-label="备注" defaultValue="单击此处添加备注" />
            </Workspace>
          </Body>

          <Status>
            <StatusSide><StatusText>幻灯片 57 / 75</StatusText><StatusText>中文(中国)</StatusText></StatusSide>
            <StatusSide>
              <StatusButton $w={64}><svg width="14" height="13" viewBox="0 0 14 13" stroke="#555" fill="#555"><path d="M0 5H14M0 8.500H14M0 12H9" /><path d="M4.500 3.500L7 .5L9.500 3.500z" /></svg>备注</StatusButton>
              <StatusButton $w={64}><svg width="14" height="13" viewBox="0 0 14 13" fill="#444"><path d="M0 0H14V9H7L4 13V9H0z" /></svg>批注</StatusButton>
              <StatusButton $w={39} $on aria-label="普通视图"><svg width="16" height="14" viewBox="0 0 16 14" fill="none" stroke="#fff" strokeWidth="1.400"><path d="M1 1H15V13H1zM4 1V13" /><path d="M7 4H12V8H7zM7 10.500H13" /><path d="M2.500 1V13" strokeWidth="2" /></svg></StatusButton>
              <StatusButton $w={38} aria-label="幻灯片浏览"><svg width="16" height="12" viewBox="0 0 16 12" fill="#444"><path d="M0 0H7V5H0zM9 0H16V5H9zM0 7H7V12H0zM9 7H16V12H9z" /></svg></StatusButton>
              <StatusButton $w={38} aria-label="幻灯片放映"><svg width="16" height="14" viewBox="0 0 16 14" fill="none" stroke="#4c4c4c" strokeWidth="1.400"><path d="M0 1H16M2 1V9H14V1M5 4H11M8 9V12M4 13H12" /></svg></StatusButton>
              <StatusButton $w={16} aria-label="缩小"><svg width="9" height="9" viewBox="0 0 9 9"><path d="M0 4.500H9" stroke="#444" strokeWidth="2" /></svg></StatusButton>
              <Zoom type="range" min="0" max="100" defaultValue="58" aria-label="缩放" />
              <StatusButton $w={18} aria-label="放大"><svg width="9" height="9" viewBox="0 0 9 9"><path d="M0 4.500H9M4.500 0V9" stroke="#444" strokeWidth="2" /></svg></StatusButton>
              <StatusButton $w={58}>148%</StatusButton>
              <StatusButton $w={32} aria-label="适应窗口"><svg width="15" height="15" viewBox="0 0 15 15" fill="none" stroke="#4c4c4c" strokeWidth="1.200"><path d="M1 1H14V14H1z" /><path d="M7.500 1V4M7.500 11V14M1 7.500H4M11 7.500H14M4 4L6 6M11 4L9 6M4 11L6 9M11 11L9 9" /></svg></StatusButton>
            </StatusSide>
          </Status>
        </Window>
      </Screen>
    </>
  );
}
